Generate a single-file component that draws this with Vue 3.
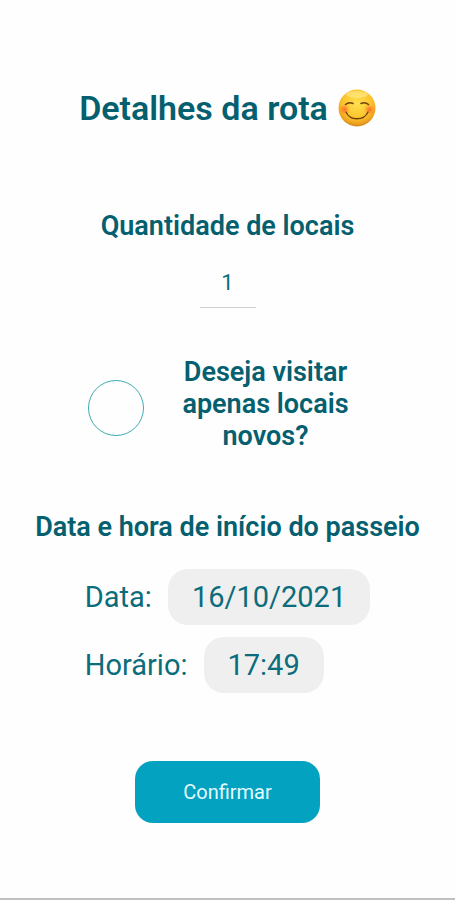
<template>
  <main class="route">
    <h1 class="title">
      Detalhes da rota
      <svg class="emoji" viewBox="0 0 38 38" role="img" aria-label="Sorriso">
        <defs>
          <radialGradient id="face" cx="50%" cy="38%" r="64%">
            <stop offset="0" stop-color="#ffe04f" />
            <stop offset="0.6" stop-color="#fbc52e" />
            <stop offset="0.84" stop-color="#eea31f" />
            <stop offset="1" stop-color="#c97c18" />
          </radialGradient>
          <radialGradient id="cheek">
            <stop offset="0" stop-color="#ff5f2a" stop-opacity="0.9" />
            <stop offset="1" stop-color="#ff7a2e" stop-opacity="0" />
          </radialGradient>
        </defs>
        <circle cx="19" cy="19" r="18.5" fill="url(#face)" />
        <ellipse cx="19" cy="5.5" rx="11" ry="3.5" fill="#fff2a0" opacity="0.5" />
        <circle cx="6.5" cy="20.5" r="5.5" fill="url(#cheek)" />
        <circle cx="31.5" cy="20.5" r="5.5" fill="url(#cheek)" />
        <g fill="none" stroke="#70410e" stroke-linecap="round" stroke-linejoin="round">
          <path d="M7.5 15.5Q11 12.5 15 14.5" stroke-width="1.6" />
          <path d="M23 14.5Q27 12.5 30.5 15.5" stroke-width="1.6" />
          <path d="M8 23C12 32 26 32 30 23" stroke-width="1.3" />
        </g>
      </svg>
    </h1>

    <section class="amount">
      <label class="heading" for="amount">Quantidade de locais</label>
      <input id="amount" v-model="amount" class="amount-input" type="text" inputmode="numeric">
    </section>

    <section class="only-new">
      <input id="only-new" v-model="onlyNew" class="check" type="checkbox">
      <label class="heading question" for="only-new">Deseja visitar apenas locais novos?</label>
    </section>

    <section class="start">
      <h2 class="heading">Data e hora de início do passeio</h2>
      <div class="fields">
        <div v-for="field in fields" :key="field.id" class="field">
          <label :for="field.id">{{ field.label }}</label>
          <button :id="field.id" class="picker" type="button">{{ field.value }}</button>
        </div>
      </div>
    </section>

    <button class="confirm" type="button">Confirmar</button>
  </main>
</template>

<script setup>
import { ref } from 'vue'

const amount = ref('1')
const onlyNew = ref(false)

const fields = ref([
  { id: 'date', label: 'Data:', value: '16/10/2021' },
  { id: 'time', label: 'Horário:', value: '17:49' }
])
</script>

<style>
body {
  margin: 0;
  background: #fefefe;
}
</style>

<style scoped>
.route {
  box-sizing: border-box;
  min-height: 100vh;
  display: flex;
  flex-direction: column;
  align-items: center;
  padding: 88px 24px 74px;
  border-bottom: 2px solid #c0c0c0;
  font-family: Roboto, "Liberation Sans", sans-serif;
  color: #04606f;
}

.title {
  display: flex;
  align-items: center;
  gap: 10px;
  margin: 0;
  font-size: 34px;
  line-height: 40px;
  font-weight: 600;
}

.emoji {
  width: 38px;
  height: 38px;
}

.heading {
  margin: 0;
  font-size: 27px;
  line-height: 32px;
  font-weight: 600;
  text-align: center;
}

.amount {
  display: flex;
  flex-direction: column;
  align-items: center;
  gap: 16px;
  margin-top: 82px;
}

.amount-input {
  box-sizing: border-box;
  width: 56px;
  height: 50px;
  padding: 0;
  border: none;
  border-bottom: 1px solid #cfcfcf;
  background: none;
  color: #0b6c7b;
  font-family: inherit;
  font-size: 22px;
  text-align: center;
}

.only-new {
  display: flex;
  align-items: flex-end;
  gap: 20px;
  margin-top: 48px;
}

.check {
  appearance: none;
  box-sizing: border-box;
  width: 56px;
  height: 56px;
  margin: 0 0 16px;
  border: 1px solid #3fa9b3;
  border-radius: 50%;
  cursor: pointer;

  &:checked {
    background: #02a2c0;
  }
}

.question {
  width: 204px;
}

.start {
  display: flex;
  flex-direction: column;
  align-items: center;
  gap: 26px;
  margin-top: 59px;
}

.fields {
  display: flex;
  flex-direction: column;
  gap: 12px;
}

.field {
  display: flex;
  align-items: center;
  gap: 16px;
  color: #0b6c7b;
  font-size: 29px;
}

.picker {
  height: 56px;
  padding: 0 24px;
  border: none;
  border-radius: 20px;
  background: #efefef;
  color: inherit;
  font-family: inherit;
  font-size: 29px;
  cursor: pointer;
}

.confirm {
  height: 62px;
  margin-top: 68px;
  padding: 0 48px;
  border: none;
  border-radius: 18px;
  background: #02a2c0;
  color: #e4fbff;
  font-family: inherit;
  font-size: 20px;
  cursor: pointer;
}
</style>
